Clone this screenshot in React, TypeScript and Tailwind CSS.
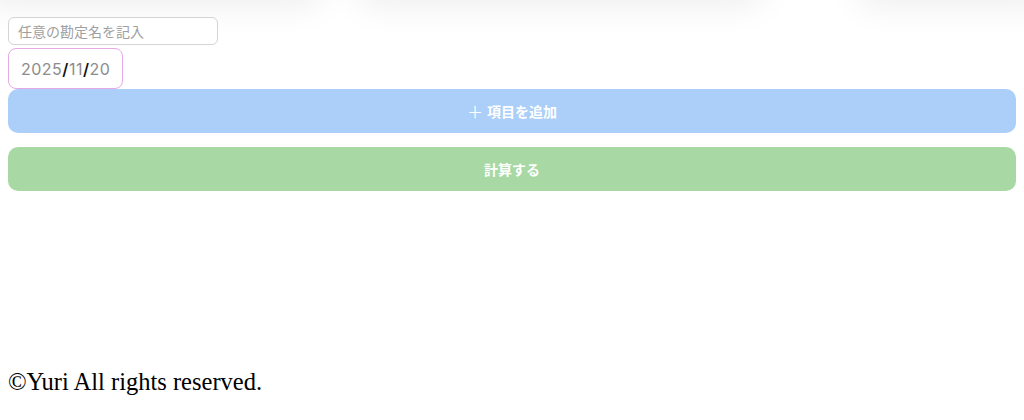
import React from "react";

export default function App() {
  return (
    <div className="relative min-h-[420px] w-[1024px] overflow-hidden bg-white font-['Noto_Sans_CJK_JP',sans-serif]">
      {/* soft shadows from elements just above the viewport */}
      <div className="pointer-events-none absolute left-0 top-0 h-0 w-full">
        <div className="absolute left-[-20px] top-[-40px] h-[40px] w-[345px] rounded-[20px] bg-white shadow-[0_6px_34px_rgba(0,0,0,0.07)]" />
        <div className="absolute left-[355px] top-[-40px] h-[40px] w-[410px] rounded-[20px] bg-white shadow-[0_6px_34px_rgba(0,0,0,0.07)]" />
        <div className="absolute left-[855px] top-[-40px] h-[40px] w-[200px] rounded-[20px] bg-white shadow-[0_6px_34px_rgba(0,0,0,0.07)]" />
      </div>

      <div className="relative flex flex-col px-2 pt-[17px]">
        <input
          type="text"
          placeholder="任意の勘定名を記入"
          className="h-[28px] w-[210px] rounded-[6px] border border-[#d4d4d4] bg-white px-[9px] text-[14px] text-[#333] outline-none placeholder:text-[#a0a0a0] font-['Noto_Sans_CJK_JP',sans-serif]"
        />
        <div className="mt-[3px] flex h-[41px] w-[115px] items-center rounded-[8px] border border-[#e7a9e5] bg-white pl-[12px] text-[16px] tracking-[0.5px] font-['Inter','Noto_Sans',sans-serif]">
          <span className="text-[#8c8c8c]">2025</span>
          <span className="font-semibold text-[#111]">/</span>
          <span className="text-[#8c8c8c]">11</span>
          <span className="font-semibold text-[#111]">/</span>
          <span className="text-[#8c8c8c]">20</span>
        </div>
        <button className="flex h-[44px] w-full items-center justify-center gap-[4px] rounded-[10px] bg-[#abcff8] text-[14px] font-bold text-white">
          <span className="text-[16px] font-normal leading-none">＋</span>
          <span>項目を追加</span>
        </button>
        <button className="mt-[14px] flex h-[44px] w-full items-center justify-center rounded-[10px] bg-[#a8d9a4] text-[14px] font-bold text-white">
          計算する
        </button>
        <div className="mt-[176px] text-[24.5px] leading-[30px] text-black font-['Liberation_Serif',serif]">
          ©Yuri All rights reserved.
        </div>
      </div>
    </div>
  );
}
